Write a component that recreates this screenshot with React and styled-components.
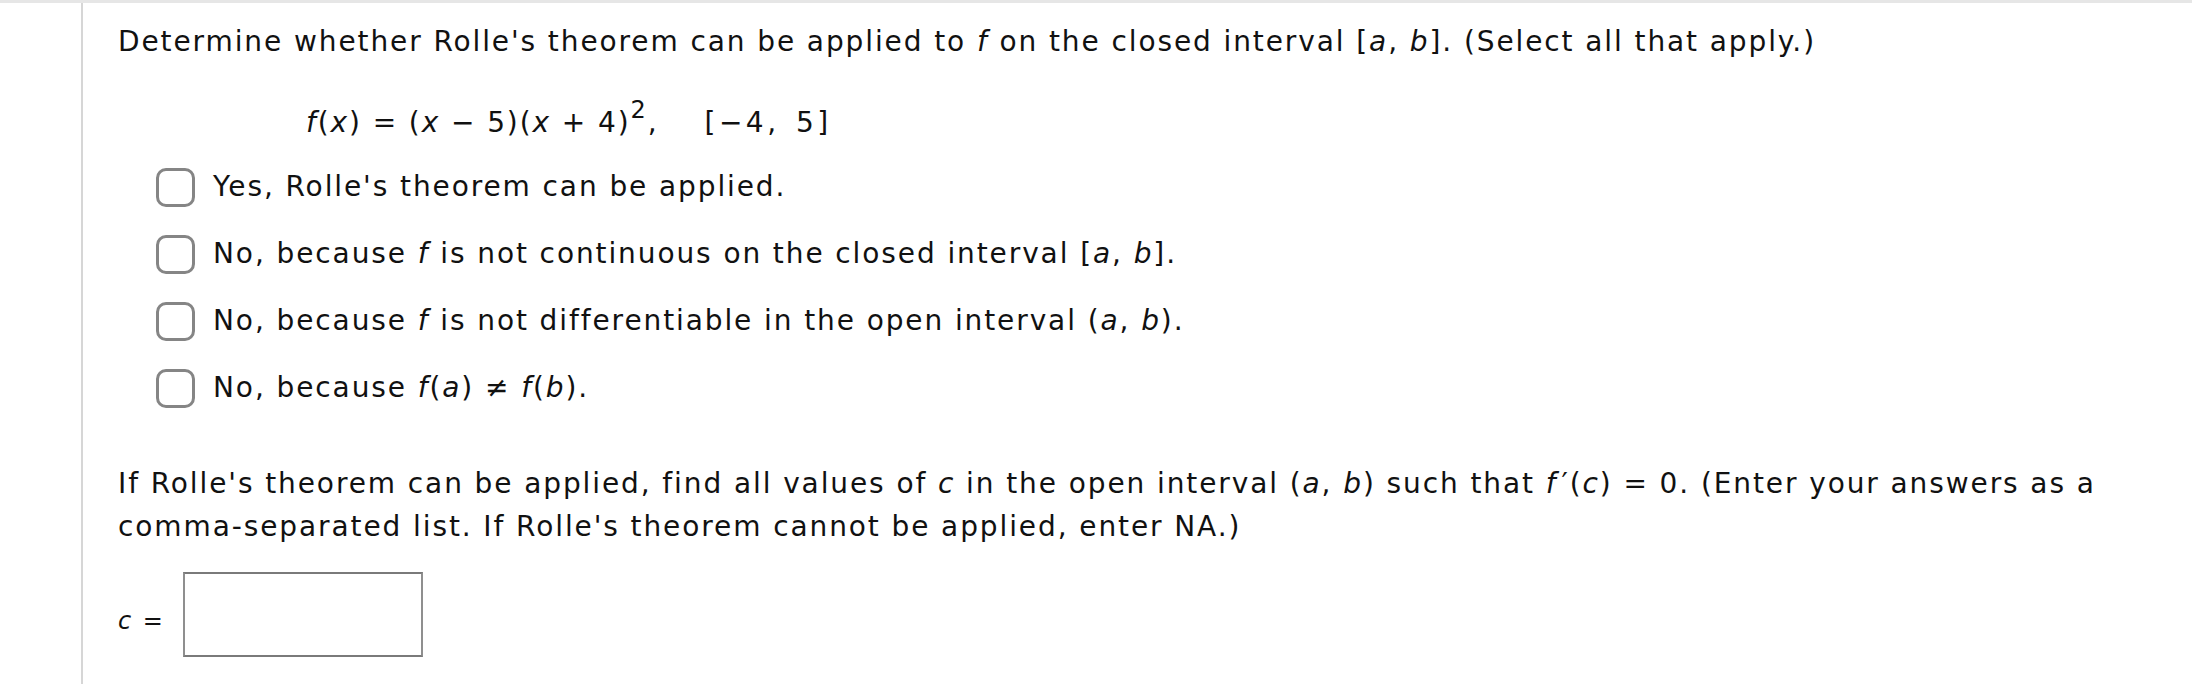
import React from 'react'
import styled, { createGlobalStyle } from 'styled-components'

const GlobalStyle = createGlobalStyle`
  html, body {
    margin: 0;
    padding: 0;
    background: #fff;
  }
  body {
    font-family: "DejaVu Sans", Verdana, sans-serif;
    color: #111;
  }
`;

const Page = styled.div`
  border-top: 3px solid #e6e6e6;
  min-height: 684px;
  box-sizing: border-box;
  display: flex;
`;

const Gutter = styled.div`
  width: 81px;
  flex-shrink: 0;
`;

const Question = styled.div`
  flex: 1;
  border-left: 2px solid #d6d6d6;
  padding: 18px 0 0 35px;
  font-size: 28px;
  line-height: 42px;
  letter-spacing: 1.9px;
`;

const Prompt = styled.p`
  margin: 0;
`;

const Formula = styled.div`
  margin: 39px 0 0 188px;
  white-space: pre;
`;

const Sup = styled.sup`
  font-size: 24px;
  line-height: 0;
  vertical-align: 14px;
`;

const Gap = styled.span`
  display: inline-block;
  width: ${p => p.w}px;
`;

const Interval = styled.span`
  letter-spacing: 3.5px;
  word-spacing: 4px;
`;

const Options = styled.ul`
  list-style: none;
  margin: 22px 0 0 0;
  padding: 0 0 0 38px;
  display: flex;
  flex-direction: column;
  gap: 25px;
`;

const Option = styled.li`
  display: flex;
  align-items: center;
  gap: 18px;
`;

const Box = styled.span`
  width: 33px;
  height: 33px;
  border: 3px solid #858585;
  border-radius: 10px;
  flex-shrink: 0;
`;

const I = styled.i`
  font-style: italic;
`;

const Prime = styled.span`
  margin-left: 4px;
`;

const Followup = styled.p`
  margin: 53px 0 0 0;
  line-height: 43px;
  max-width: 1990px;
`;

const AnswerRow = styled.div`
  display: flex;
  align-items: center;
  gap: 18px;
  margin-top: 24px;
`;

const AnswerLabel = styled.span`
  font-size: 24px;
  padding-top: 12px;
`;

const AnswerInput = styled.input`
  width: 236px;
  height: 81px;
  box-sizing: content-box;
  padding: 0;
  border: 2px solid #8f8f8f;
  border-top-color: #7a7a7a;
  border-bottom-color: #7a7a7a;
  background: #fff;
  font: inherit;
  outline: none;
`;

const options = [
  <>Yes, Rolle's theorem can be applied.</>,
  <>No, because <I>f</I> is not continuous on the closed interval [<I>a</I>, <I>b</I>].</>,
  <>No, because <I>f</I> is not differentiable in the open interval (<I>a</I>, <I>b</I>).</>,
  <>No, because <I>f</I>(<I>a</I>) ≠ <I>f</I>(<I>b</I>).</>,
]

export default function App() {
  return (
    <>
      <GlobalStyle />
      <Page>
        <Gutter />
        <Question>
          <Prompt>
            Determine whether Rolle's theorem can be applied to <I>f</I> on the closed interval [<I>a</I>, <I>b</I>]. (Select all that apply.)
          </Prompt>
          <Formula>
            <I>f</I>(<I>x</I>) = (<I>x</I> − 5)(<I>x</I> + 4)<Sup>2</Sup>,<Gap w={46} /><Interval>[−4, 5]</Interval>
          </Formula>
          <Options>
            {options.map((o, i) => (
              <Option key={i}>
                <Box />
                <span>{o}</span>
              </Option>
            ))}
          </Options>
          <Followup>
            If Rolle's theorem can be applied, find all values of <I>c</I> in the open interval (<I>a</I>, <I>b</I>) such that <I>f</I><Prime>′</Prime>(<I>c</I>) = 0. (Enter your answers as a comma-separated list. If Rolle's theorem cannot be applied, enter NA.)
          </Followup>
          <AnswerRow>
            <AnswerLabel><I>c</I> =</AnswerLabel>
            <AnswerInput type="text" />
          </AnswerRow>
        </Question>
      </Page>
    </>
  )
}
